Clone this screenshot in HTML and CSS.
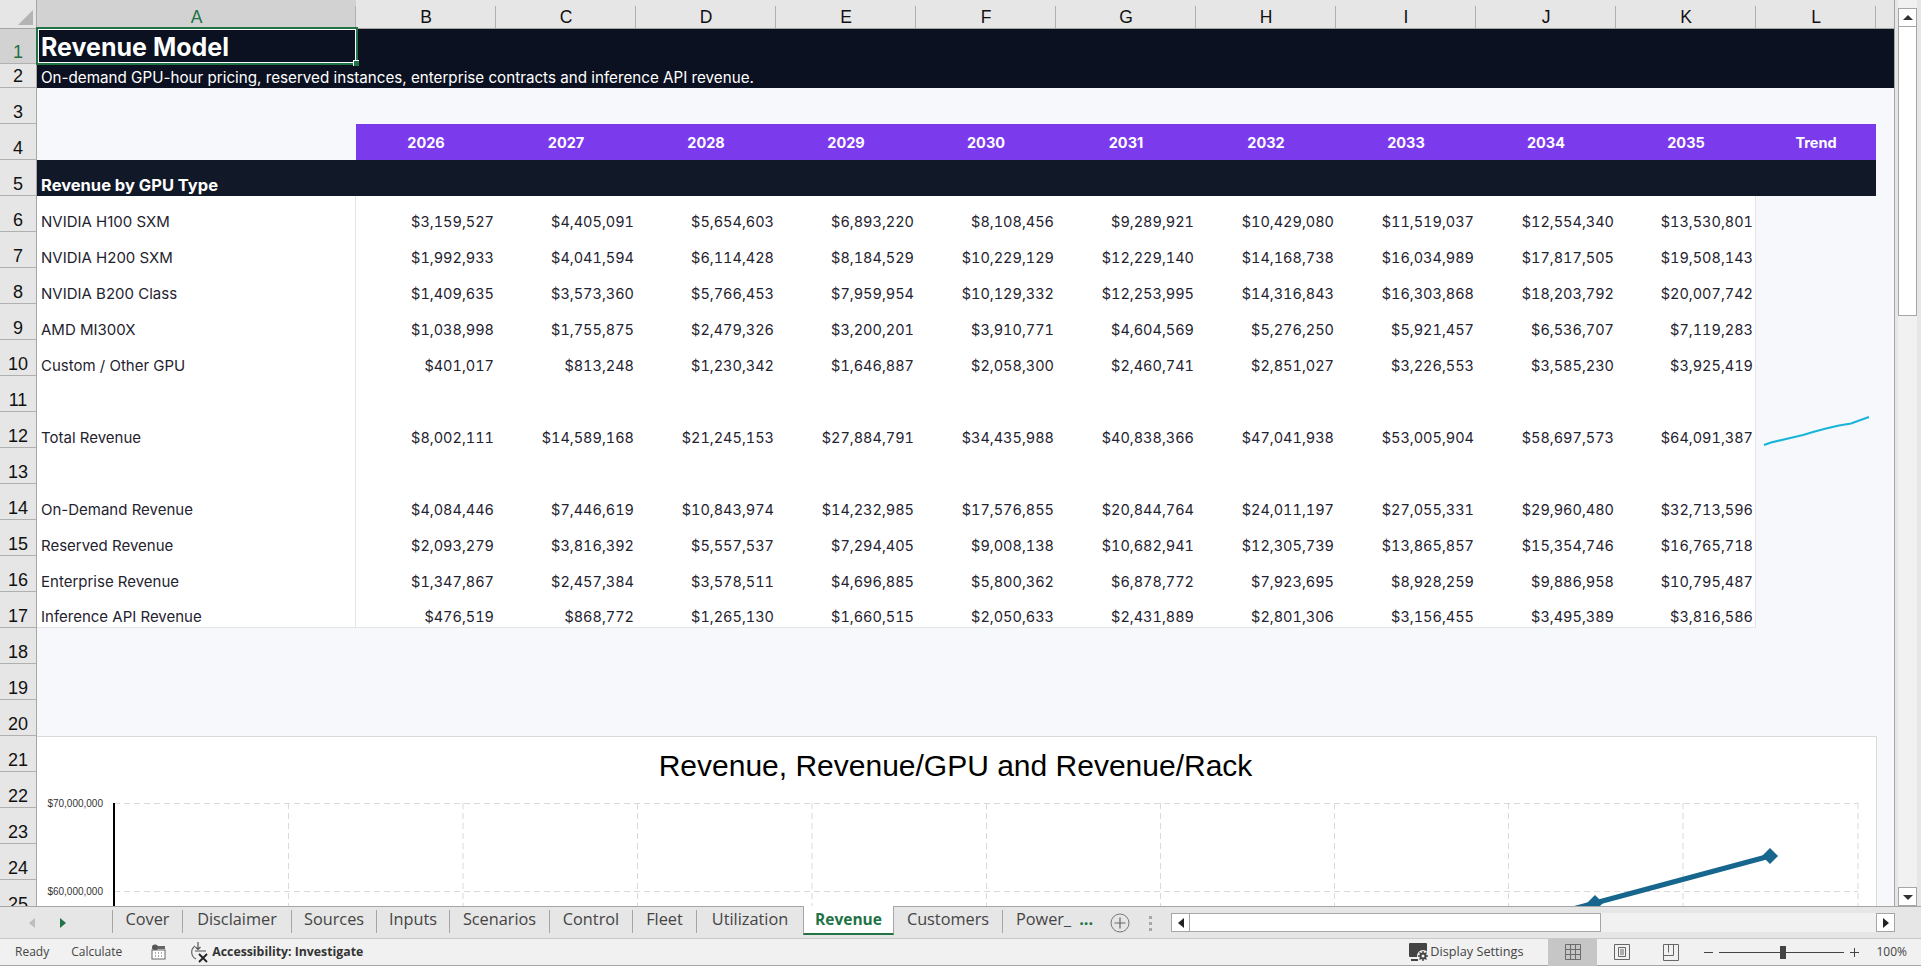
FILE: index.html
```html
<!DOCTYPE html>
<html lang="en">
<head>
    <meta charset="UTF-8">
    <meta name="viewport" content="width=device-width, initial-scale=1.0">
    <title>Revenue Model</title>
    <link rel="stylesheet" href="styles.css">
</head>
<body>
<div class="app">
    <div class="main">
        <div class="sheet">
            <table class="grid">
                <colgroup>
                    <col class="col-rowhead"><col class="col-a">
                    <col class="col-num"><col class="col-num"><col class="col-num"><col class="col-num"><col class="col-num">
                    <col class="col-num"><col class="col-num"><col class="col-num"><col class="col-num"><col class="col-num">
                    <col class="col-l"><col class="col-m">
                </colgroup>
                <tr class="r-head">
                    <th class="corner"><svg width="37" height="28" viewBox="0 0 37 28"><polygon points="33,10 33,25 18,25" fill="#b4b4b4"/></svg></th>
                    <th class="ch on">A</th><th class="ch">B</th><th class="ch">C</th><th class="ch">D</th><th class="ch">E</th><th class="ch">F</th>
                    <th class="ch">G</th><th class="ch">H</th><th class="ch">I</th><th class="ch">J</th><th class="ch">K</th><th class="ch">L</th><th class="ch last"></th>
                </tr>
                <tr class="r1">
                    <th class="rh on">1</th>
                    <td class="title" colspan="13"><div class="title-cell"><span>Revenue Model</span><div class="selection"><i></i></div></div></td>
                </tr>
                <tr class="r2">
                    <th class="rh">2</th>
                    <td class="subtitle" colspan="13">On-demand GPU-hour pricing, reserved instances, enterprise contracts and inference API revenue.</td>
                </tr>
                <tr class="r"><th class="rh">3</th><td colspan="13"></td></tr>
                <tr class="r years">
                    <th class="rh">4</th><td></td>
                    <td class="yr">2026</td><td class="yr">2027</td><td class="yr">2028</td><td class="yr">2029</td><td class="yr">2030</td>
                    <td class="yr">2031</td><td class="yr">2032</td><td class="yr">2033</td><td class="yr">2034</td><td class="yr">2035</td><td class="yr">Trend</td><td class="bg"></td>
                </tr>
                <tr class="r">
                    <th class="rh">5</th><td class="section" colspan="12">Revenue by GPU Type</td><td class="bg"></td>
                </tr>
                <tr class="r data">
                    <th class="rh">6</th><td class="lbl">NVIDIA H100 SXM</td>
                    <td>$3,159,527</td><td>$4,405,091</td><td>$5,654,603</td><td>$6,893,220</td><td>$8,108,456</td>
                    <td>$9,289,921</td><td>$10,429,080</td><td>$11,519,037</td><td>$12,554,340</td><td class="end">$13,530,801</td><td class="bg" colspan="2"></td>
                </tr>
                <tr class="r data">
                    <th class="rh">7</th><td class="lbl">NVIDIA H200 SXM</td>
                    <td>$1,992,933</td><td>$4,041,594</td><td>$6,114,428</td><td>$8,184,529</td><td>$10,229,129</td>
                    <td>$12,229,140</td><td>$14,168,738</td><td>$16,034,989</td><td>$17,817,505</td><td class="end">$19,508,143</td><td class="bg" colspan="2"></td>
                </tr>
                <tr class="r data">
                    <th class="rh">8</th><td class="lbl">NVIDIA B200 Class</td>
                    <td>$1,409,635</td><td>$3,573,360</td><td>$5,766,453</td><td>$7,959,954</td><td>$10,129,332</td>
                    <td>$12,253,995</td><td>$14,316,843</td><td>$16,303,868</td><td>$18,203,792</td><td class="end">$20,007,742</td><td class="bg" colspan="2"></td>
                </tr>
                <tr class="r data">
                    <th class="rh">9</th><td class="lbl">AMD MI300X</td>
                    <td>$1,038,998</td><td>$1,755,875</td><td>$2,479,326</td><td>$3,200,201</td><td>$3,910,771</td>
                    <td>$4,604,569</td><td>$5,276,250</td><td>$5,921,457</td><td>$6,536,707</td><td class="end">$7,119,283</td><td class="bg" colspan="2"></td>
                </tr>
                <tr class="r data">
                    <th class="rh">10</th><td class="lbl">Custom / Other GPU</td>
                    <td>$401,017</td><td>$813,248</td><td>$1,230,342</td><td>$1,646,887</td><td>$2,058,300</td>
                    <td>$2,460,741</td><td>$2,851,027</td><td>$3,226,553</td><td>$3,585,230</td><td class="end">$3,925,419</td><td class="bg" colspan="2"></td>
                </tr>
                <tr class="r data">
                    <th class="rh">11</th><td class="lbl"></td>
                    <td></td><td></td><td></td><td></td><td></td><td></td><td></td><td></td><td></td><td class="end"></td><td class="bg" colspan="2"></td>
                </tr>
                <tr class="r data">
                    <th class="rh">12</th><td class="lbl">Total Revenue</td>
                    <td>$8,002,111</td><td>$14,589,168</td><td>$21,245,153</td><td>$27,884,791</td><td>$34,435,988</td>
                    <td>$40,838,366</td><td>$47,041,938</td><td>$53,005,904</td><td>$58,697,573</td><td class="end">$64,091,387</td>
                    <td class="bg spark-cell" colspan="2"><svg class="spark" width="112" height="34" viewBox="0 0 112 34"><polyline points="3,32 10,29.5 25,26 42,22 52,19 65,15.5 78,12.5 90,10.5 108,4" fill="none" stroke="#18b4d8" stroke-width="2"/></svg></td>
                </tr>
                <tr class="r data">
                    <th class="rh">13</th><td class="lbl"></td>
                    <td></td><td></td><td></td><td></td><td></td><td></td><td></td><td></td><td></td><td class="end"></td><td class="bg" colspan="2"></td>
                </tr>
                <tr class="r data">
                    <th class="rh">14</th><td class="lbl">On-Demand Revenue</td>
                    <td>$4,084,446</td><td>$7,446,619</td><td>$10,843,974</td><td>$14,232,985</td><td>$17,576,855</td>
                    <td>$20,844,764</td><td>$24,011,197</td><td>$27,055,331</td><td>$29,960,480</td><td class="end">$32,713,596</td><td class="bg" colspan="2"></td>
                </tr>
                <tr class="r data">
                    <th class="rh">15</th><td class="lbl">Reserved Revenue</td>
                    <td>$2,093,279</td><td>$3,816,392</td><td>$5,557,537</td><td>$7,294,405</td><td>$9,008,138</td>
                    <td>$10,682,941</td><td>$12,305,739</td><td>$13,865,857</td><td>$15,354,746</td><td class="end">$16,765,718</td><td class="bg" colspan="2"></td>
                </tr>
                <tr class="r data">
                    <th class="rh">16</th><td class="lbl">Enterprise Revenue</td>
                    <td>$1,347,867</td><td>$2,457,384</td><td>$3,578,511</td><td>$4,696,885</td><td>$5,800,362</td>
                    <td>$6,878,772</td><td>$7,923,695</td><td>$8,928,259</td><td>$9,886,958</td><td class="end">$10,795,487</td><td class="bg" colspan="2"></td>
                </tr>
                <tr class="r data bottom">
                    <th class="rh">17</th><td class="lbl">Inference API Revenue</td>
                    <td>$476,519</td><td>$868,772</td><td>$1,265,130</td><td>$1,660,515</td><td>$2,050,633</td>
                    <td>$2,431,889</td><td>$2,801,306</td><td>$3,156,455</td><td>$3,495,389</td><td class="end">$3,816,586</td><td class="bg" colspan="2"></td>
                </tr>
                <tr class="r"><th class="rh">18</th><td colspan="13"></td></tr>
                <tr class="r"><th class="rh">19</th><td colspan="13"></td></tr>
                <tr class="r"><th class="rh">20</th><td colspan="13"></td></tr>
                <tr class="r"><th class="rh">21</th><td colspan="13"></td></tr>
                <tr class="r"><th class="rh">22</th><td colspan="13"></td></tr>
                <tr class="r"><th class="rh">23</th><td colspan="13"></td></tr>
                <tr class="r"><th class="rh">24</th><td colspan="13"></td></tr>
                <tr class="r"><th class="rh">25</th><td colspan="13"></td></tr>
            </table>

            <!-- embedded chart floats over rows 21+ -->
            <div class="chart">
                <div class="chart-title">Revenue, Revenue/GPU and Revenue/Rack</div>
                <svg class="chart-plot" width="1840" height="170" viewBox="0 0 1840 170">
                    <g stroke="#d9d9d9" stroke-width="1" stroke-dasharray="6 4" fill="none">
                        <path d="M77 66.500H1821M77 154.500H1821"/>
                        <path d="M251.500 66V170M426 66V170M600.500 66V170M775 66V170M949.500 66V170M1123.500 66V170M1297.500 66V170M1471.500 66V170M1646 66V170M1821 66V170"/>
                    </g>
                    <path d="M77 66V170" stroke="#000" stroke-width="2" fill="none"/>
                    <path d="M1383 213L1558 166L1733 119" stroke="#17668d" stroke-width="5" fill="none"/>
                    <polygon points="1733,111 1741,119 1733,127 1725,119" fill="#17668d"/>
                    <polygon points="1558,158 1566,166 1558,174 1550,166" fill="#17668d"/>
                    <text class="axis" x="66" y="70" text-anchor="end">$70,000,000</text>
                    <text class="axis" x="66" y="158" text-anchor="end">$60,000,000</text>
                </svg>
            </div>
        </div>

        <div class="vscroll">
            <div class="sb-btn"><svg width="12" height="8" viewBox="0 0 12 8"><polygon points="6,1 11,6 1,6" fill="#333"/></svg></div>
            <div class="sb-thumb"></div>
            <div class="sb-track"></div>
            <div class="sb-btn"><svg width="12" height="8" viewBox="0 0 12 8"><polygon points="1,2 11,2 6,7" fill="#333"/></svg></div>
        </div>
    </div>

    <div class="tabbar">
        <div class="tab-nav">
            <svg width="8" height="12" viewBox="0 0 8 12"><polygon points="7,1 7,11 1,6" fill="#bdbdbd"/></svg>
            <svg width="8" height="12" viewBox="0 0 8 12"><polygon points="1,1 7,6 1,11" fill="#217346"/></svg>
        </div>
        <div class="tabs">
            <div class="tab">Cover</div>
            <div class="tab">Disclaimer</div>
            <div class="tab">Sources</div>
            <div class="tab">Inputs</div>
            <div class="tab">Scenarios</div>
            <div class="tab">Control</div>
            <div class="tab">Fleet</div>
            <div class="tab">Utilization</div>
            <div class="tab active">Revenue</div>
            <div class="tab">Customers</div>
            <div class="tab cut"><span class="cut-name">Power_</span><span class="more">...</span></div>
        </div>
        <svg class="add" width="20" height="20" viewBox="0 0 20 20"><circle cx="10" cy="10" r="9" fill="none" stroke="#777" stroke-width="1"/><path d="M10 4.500V15.500M4.500 10H15.500" stroke="#666" stroke-width="1.200"/></svg>
        <div class="dots"><i></i><i></i><i></i></div>
        <div class="hscroll">
            <div class="sb-btn"><svg width="8" height="12" viewBox="0 0 8 12"><polygon points="7,1 7,11 1,6" fill="#222"/></svg></div>
            <div class="hs-thumb"></div>
            <div class="hs-track"></div>
            <div class="sb-btn"><svg width="8" height="12" viewBox="0 0 8 12"><polygon points="1,1 7,6 1,11" fill="#222"/></svg></div>
        </div>
    </div>

    <div class="statusbar">
        <span class="st-ready">Ready</span>
        <span class="st-calc">Calculate</span>
        <svg class="st-cal" width="16" height="16" viewBox="0 0 16 16">
            <circle cx="5" cy="3.500" r="3" fill="#555"/>
            <rect x="8" y="2" width="7" height="3" fill="#666"/>
            <rect x="2" y="6" width="13" height="9" fill="#fff" stroke="#666"/>
            <path d="M5 9H6M8 9H9M11 9H12M5 12H6M8 12H9M11 12H12" stroke="#555"/>
        </svg>
        <svg class="st-acc" width="20" height="22" viewBox="0 0 20 22">
            <path d="M6 5A7.500 7.500 0 0 0 7 18" fill="none" stroke="#666" stroke-width="1.200"/>
            <path d="M9 1V8M6.500 6L9 8.500L11.500 6M6 10H17" fill="none" stroke="#555" stroke-width="1.200"/>
            <path d="M10 13L18 21M18 13L10 21" stroke="#222" stroke-width="1.800"/>
        </svg>
        <span class="st-access">Accessibility: Investigate</span>
        <span class="st-spacer"></span>
        <svg class="st-disp" width="20" height="22" viewBox="0 0 20 22">
            <rect x="0" y="2" width="18" height="14" rx="1" fill="#444"/>
            <rect x="2" y="18" width="7" height="2" fill="#444"/>
            <circle cx="14" cy="15" r="6" fill="#f1f1f1"/>
            <path d="M14 10V20M9 15H19M10.500 11.500L17.500 18.500M17.500 11.500L10.500 18.500" stroke="#444" stroke-width="1.400"/>
            <circle cx="14" cy="15" r="3.500" fill="#444"/>
            <circle cx="14" cy="15" r="1.500" fill="#f1f1f1"/>
        </svg>
        <span class="st-dlabel">Display Settings</span>
        <div class="view-btn on"><svg width="16" height="16" viewBox="0 0 16 16"><path d="M.5.5H15.500V15.500H.5ZM5.500.5V15.500M10.500.5V15.500M.5 5.500H15.500M.5 10.500H15.500" fill="none" stroke="#6b6b6b"/></svg></div>
        <div class="view-btn"><svg width="16" height="16" viewBox="0 0 16 16"><path d="M.5.5H15.500V15.500H.5Z" fill="none" stroke="#666"/><path d="M4.500 3.500H11.500V12.500H4.500ZM6 6H10M6 8H10M6 10H10" fill="none" stroke="#666"/></svg></div>
        <div class="view-btn"><svg width="16" height="17" viewBox="0 0 16 17"><path d="M.5.5H15.500V16.500H.5ZM.5 11.500H10.500V.5M5.500.5V8.500" fill="none" stroke="#666"/></svg></div>
        <div class="zoom">
            <span class="z-sign"></span>
            <div class="z-slider"><i></i></div>
            <span class="z-sign plus"></span>
        </div>
        <span class="st-pct">100%</span>
    </div>
</div>
</body>
</html>
```

FILE: styles.css
```css
* {
    box-sizing: border-box;
}
html, body {
    margin: 0;
    padding: 0;
    height: 100%;
    overflow: hidden;
}
body {
    font-family: "Open Sans", "Noto Sans", sans-serif;
    background: #e6e6e6;
}
.app {
    width: 1921px;
    height: 966px;
    display: flex;
    flex-direction: column;
}
.main {
    display: flex;
    height: 907px;
    border-bottom: 1px solid #a6a6a6;
}

/* sheet */
.sheet {
    position: relative;
    width: 1895px;
    overflow: hidden;
    background: #f7f8fc;
    border-right: 1px solid #a6a6a6;
}
.grid {
    border-collapse: separate;
    border-spacing: 0;
    table-layout: fixed;
    width: 1894px;
    font-family: Inter, sans-serif;
    font-size: 15px;
    color: #1f2330;
}
.col-rowhead { width: 37px; }
.col-a { width: 319px; }
.col-num { width: 140px; }
.col-l { width: 120px; }
.col-m { width: 18px; }
.grid th, .grid td {
    padding: 0;
    font-weight: normal;
}
.r-head { height: 29px; }
.r1 { height: 35px; }
.r2 { height: 24px; }
.r { height: 36px; }

.corner {
    background: #e6e6e6;
    border-bottom: 1px solid #a6a6a6;
    border-right: 1px solid #a6a6a6;
    line-height: 0;
}
.grid .ch {
    position: relative;
    padding-top: 6px;
    background: #e6e6e6;
    border-bottom: 1px solid #a6a6a6;
    font-family: "Liberation Sans", Arial, sans-serif;
    font-size: 17.5px;
    line-height: 22px;
    color: #111;
    text-align: center;
}
.ch::after {
    content: "";
    position: absolute;
    right: 0;
    top: 6px;
    bottom: 0;
    width: 1px;
    background: #b0b0b0;
}
.ch.last::after { display: none; }
.grid .ch.on {
    background: #d2d2d2;
    color: #217346;
}
.rh {
    background: #e6e6e6;
    border-right: 1px solid #a6a6a6;
    border-bottom: 1px solid #b0b0b0;
    font-family: "Liberation Sans", Arial, sans-serif;
    color: #111;
    text-align: center;
    vertical-align: bottom;
    line-height: 21px;
}
.grid .rh {
    font-size: 18px;
}
.rh.on {
    background: #d2d2d2;
    color: #217346;
}

/* dark title band */
.title, .subtitle {
    background: #0b1120;
    color: #fff;
    padding: 0;
}
.title-cell {
    position: relative;
    height: 35px;
    padding: 1px 4px 0;
    font-size: 25px;
    font-weight: 700;
    line-height: 34px;
}
.selection {
    position: absolute;
    left: -1px;
    top: -2px;
    width: 322px;
    height: 38px;
    border: 2px solid #217346;
    box-shadow: inset 0 0 0 1px #fff;
}
.selection i {
    position: absolute;
    right: -3px;
    bottom: -3px;
    width: 6px;
    height: 6px;
    background: #217346;
    border-left: 1px solid #fff;
    border-top: 1px solid #fff;
}
.grid .subtitle {
    padding-left: 4px;
    font-size: 15.2px;
    vertical-align: bottom;
    line-height: 20px;
}

/* year header + section */
.yr {
    background: #7c3aed;
    color: #fff;
    text-align: center;
}
.grid .yr {
    font-weight: 700;
    font-size: 14.5px;
}
.grid .section {
    background: #111827;
    color: #fff;
    font-weight: 700;
    font-size: 16.500px;
    vertical-align: bottom;
    padding: 0 0 1px 4px;
    line-height: 20px;
}

/* data rows */
.data td {
    background: #fff;
    text-align: right;
    vertical-align: bottom;
    padding: 0 2px 0 0;
    font-size: 14.5px;
    font-variant-numeric: tabular-nums;
    line-height: 20px;
}
.data .lbl {
    text-align: left;
    padding-left: 4px;
    font-size: 15px;
    font-variant-numeric: normal;
    border-right: 1px solid #e3e5ea;
}
.data .end {
    border-right: 1px solid #e3e5ea;
}
.data .bg, .bg {
    background: #f7f8fc;
}
.bottom td {
    border-bottom: 1px solid #e3e5ea;
}
.bottom td.bg {
    border-bottom: none;
}
.data .spark-cell {
    position: relative;
    padding: 0;
}
.spark {
    position: absolute;
    left: 5px;
    top: 1px;
}

/* chart over the cells */
.chart {
    position: absolute;
    left: 37px;
    top: 736px;
    width: 1840px;
    height: 170px;
    background: #fff;
    border-top: 1px solid #d9d9d9;
    border-right: 1px solid #d9d9d9;
}
.chart-title {
    position: absolute;
    left: 0;
    right: 2px;
    top: 11px;
    text-align: center;
    font-family: "Liberation Sans", Arial, sans-serif;
    font-size: 30px;
    line-height: 36px;
    color: #000;
}
.chart-plot {
    display: block;
}
.axis {
    font-family: "Liberation Sans", Arial, sans-serif;
    font-size: 10px;
    fill: #333;
}

/* vertical scrollbar */
.vscroll {
    width: 26px;
    padding: 8px 4px 0 3px;
    display: flex;
    flex-direction: column;
    background: linear-gradient(#f1f1f1, #f1f1f1) no-repeat 3px 0 / 19px 100%, #e6e6e6;
}
.sb-btn {
    flex: none;
    width: 19px;
    height: 19px;
    background: #fff;
    border: 1px solid #a6a6a6;
    display: flex;
    align-items: center;
    justify-content: center;
}
.sb-thumb {
    flex: none;
    height: 289px;
    background: #fff;
    border: 1px solid #a6a6a6;
    border-top: none;
}
.sb-track { flex: 1; }

/* tabs */
.tabbar {
    height: 31px;
    display: flex;
    align-items: stretch;
    background: #e6e6e6;
}
.tab-nav {
    width: 112px;
    display: flex;
    align-items: center;
    gap: 23px;
    padding: 0 0 0 28px;
}
.tabs {
    display: flex;
    width: 994px;
    font-size: 16.3px;
    color: #444;
}
.tab {
    height: 23px;
    line-height: 19px;
    margin-top: 3px;
    text-align: center;
    border-left: 1px solid #a6a6a6;
    white-space: nowrap;
}
.tab:nth-child(1) { width: 70px; }
.tab:nth-child(2) { width: 109px; }
.tab:nth-child(3) { width: 85px; }
.tab:nth-child(4) { width: 73px; }
.tab:nth-child(5) { width: 100px; }
.tab:nth-child(6) { width: 83px; }
.tab:nth-child(7) { width: 64px; }
.tab:nth-child(8) { width: 107px; }
.tab:nth-child(9) { width: 91px; }
.tab:nth-child(10) { width: 108px; border-left: none; }
.tab.active {
    margin-top: -1px;
    height: 29px;
    line-height: 26px;
    background: #fff;
    border-left: 1px solid #a6a6a6;
    border-right: 1px solid #a6a6a6;
    border-bottom: 2px solid #217346;
    color: #217346;
    font-size: 15.5px;
    font-weight: 700;
}
.tab.cut {
    width: 104px;
    display: flex;
    padding-left: 13px;
}
.more {
    margin-left: 8px;
    color: #217346;
    font-weight: 700;
}
.add {
    margin: 6px 0 0 4px;
}
.dots {
    width: 41px;
    display: flex;
    flex-direction: column;
    align-items: center;
    gap: 3px;
    padding-top: 9px;
}
.dots i {
    width: 3px;
    height: 3px;
    background: #a8a8a8;
}
.hscroll {
    flex: 1;
    height: 19px;
    margin-top: 6px;
    margin-right: 26px;
    display: flex;
    background: #f1f1f1;
}
.hs-thumb {
    width: 411px;
    background: #fff;
    border: 1px solid #a6a6a6;
    border-left: none;
}
.hs-track { flex: 1; }

/* status bar */
.statusbar {
    height: 28px;
    display: flex;
    align-items: center;
    background: #f1f1f1;
    border-top: 1px solid #c8c8c8;
    border-bottom: 1px solid #a6a6a6;
    font-size: 12px;
    color: #444;
    white-space: nowrap;
}
.statusbar span:not(.z-sign) {
    padding-bottom: 2px;
}
.st-ready { margin-left: 15px; }
.st-calc { margin-left: 22px; }
.st-cal { margin-left: 28px; }
.st-acc { margin-left: 23px; }
.st-access {
    margin-left: 3px;
    font-size: 12.300px;
    font-weight: 700;
    color: #333;
}
.st-spacer { flex: 1; }
.st-dlabel {
    margin: 0 25px 0 1px;
    font-size: 12.700px;
}
.view-btn {
    width: 49px;
    height: 27px;
    display: flex;
    align-items: center;
    justify-content: center;
}
.view-btn.on { background: #c6c6c6; }
.zoom {
    display: flex;
    align-items: center;
    margin-left: 9px;
}
.z-sign {
    position: relative;
    width: 9px;
    height: 1px;
    background: #444;
}
.z-sign.plus::after {
    content: "";
    position: absolute;
    left: 4px;
    top: -4px;
    width: 1px;
    height: 9px;
    background: #444;
}
.z-slider {
    position: relative;
    width: 125px;
    height: 1px;
    margin: 0 6px;
    background: #444;
}
.z-slider i {
    position: absolute;
    left: 61px;
    top: -6px;
    width: 6px;
    height: 13px;
    background: #444;
}
.st-pct {
    margin-left: 17px;
    margin-right: 14px;
}
```
